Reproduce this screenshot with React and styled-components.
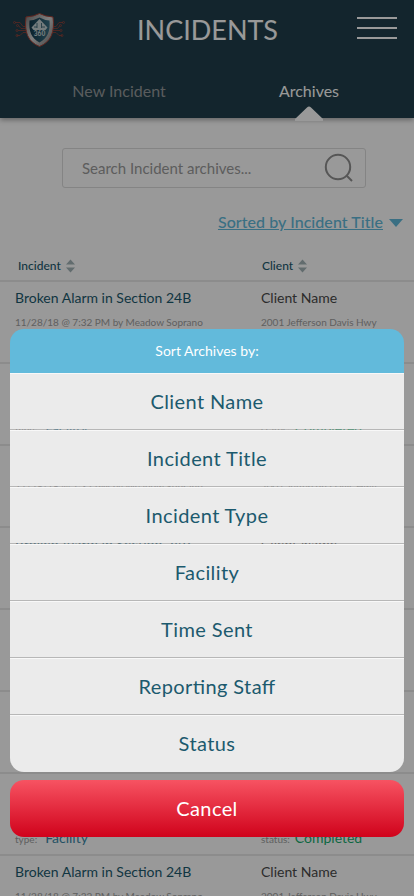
import React, { Fragment } from 'react';
import styled, { createGlobalStyle } from 'styled-components';

const palette = {
    navy: '#213f4b',
    teal: '#1c5a6e',
    blue: '#3d88a8',
    sky: '#62badb',
    green: '#17ad6e',
};

const GlobalStyle = createGlobalStyle`
    * {
        box-sizing: border-box;
    }
    body {
        margin: 0;
        background: #fff;
        font-family: Lato, 'Open Sans', sans-serif;
    }
`;

const Screen = styled.div`
    width: 414px;
    height: 896px;
    overflow: hidden;
    position: relative;
    background: #fff;
`;

const Header = styled.header`
    height: 118px;
    background: ${palette.navy};
    box-shadow: 0 2px 5px rgba(0, 0, 0, 0.35);
`;

const TitleBar = styled.div`
    display: flex;
    align-items: center;
    height: 60px;
    padding: 0 17px 0 12px;
`;

const Title = styled.h1`
    flex: 1;
    margin: 0;
    padding-right: 8px;
    color: #fff;
    font-size: 27px;
    line-height: 34px;
    font-weight: 400;
    text-align: center;
`;

const MenuButton = styled.button`
    display: flex;
    flex-direction: column;
    justify-content: space-between;
    width: 40px;
    height: 22px;
    margin-top: -4px;
    padding: 0;
    border: 0;
    background: none;

    span {
        height: 2px;
        background: #fff;
    }
`;

const Tabs = styled.nav`
    display: flex;
    height: 58px;
    padding: 0 10px 0 24px;
`;

const Tab = styled.a`
    display: flex;
    flex-direction: column;
    align-items: center;
    justify-content: space-between;
    flex: 1;
    padding-top: 21px;
    font-size: 16px;
    line-height: 20px;
    color: ${({ $active }) => ($active ? '#fff' : '#969a9c')};

    svg {
        margin-bottom: -3px;
    }
`;

const SearchBox = styled.div`
    display: flex;
    align-items: center;
    justify-content: space-between;
    width: 304px;
    height: 40px;
    margin: 30px 0 0 62px;
    padding: 0 11px 0 19px;
    border: 1px solid #dcdcdc;
    border-radius: 3px;
    color: #9b9b9b;
    font-size: 15px;
`;

const SortLink = styled.div`
    display: flex;
    align-items: center;
    justify-content: flex-end;
    gap: 6px;
    height: 20px;
    margin-top: 23px;
    padding-right: 11px;
    color: ${palette.sky};
    font-size: 16px;
    font-weight: 500;
    letter-spacing: 0.06px;

    span {
        text-decoration: underline;
    }
    svg {
        margin-top: 4px;
    }
`;

const ListHead = styled.div`
    display: grid;
    grid-template-columns: 244px 1fr;
    height: 49px;
    padding: 25px 0 0 18px;
    font-size: 12px;
    line-height: 20px;
    font-weight: 500;
    color: ${palette.teal};
`;

const HeadCell = styled.div`
    display: flex;
    align-items: center;
    gap: 5px;
    height: 20px;
`;

const Row = styled.div`
    display: grid;
    grid-template-columns: 246px 1fr;
    height: 82px;
    padding: 6px 0 0 15px;
    border-top: 2px solid #eaeaea;
`;

const Name = styled.div`
    height: 20px;
    font-size: 14px;
    line-height: 20px;
    color: ${({ $color }) => $color};
`;

const Meta = styled.div`
    height: 14px;
    margin-top: 7px;
    font-size: 10px;
    line-height: 14px;
    color: #a0a0a0;
`;

const Field = styled.div`
    display: flex;
    align-items: baseline;
    gap: ${({ $gap }) => $gap}px;
    margin-top: 7px;
    height: 20px;
    font-size: 14px;
    line-height: 20px;
    color: ${({ $color }) => $color};

    small {
        font-size: 10px;
        color: #a0a0a0;
    }
`;

const Overlay = styled.div`
    position: absolute;
    inset: 0;
    display: flex;
    flex-direction: column;
    justify-content: flex-end;
    gap: 8px;
    padding: 0 10px 59px;
    background: rgba(0, 0, 0, 0.4);
`;

const SheetTitle = styled.div`
    height: 44px;
    border-radius: 14px 14px 0 0;
    background: ${palette.sky};
    color: #fff;
    font-size: 14px;
    line-height: 44px;
    text-align: center;
`;

const Divider = styled.div`
    height: 1px;
    background: rgba(255, 255, 255, 0.3);
`;

const Option = styled.div`
    height: 56px;
    background: #ebebeb;
    box-shadow: inset 0 1px 0 #f8f8f8;
    color: ${palette.teal};
    font-size: 20px;
    line-height: 57px;
    letter-spacing: 0.4px;
    font-feature-settings: 'liga' 1;
    text-align: center;

    &:last-child {
        height: 57px;
        border-radius: 0 0 14px 14px;
    }
`;

const Cancel = styled.button`
    flex: none;
    height: 57px;
    padding: 0 0 2px;
    border: 0;
    border-radius: 14px;
    background: linear-gradient(#f75362, #d0021b);
    color: #fff;
    font-family: inherit;
    font-size: 20px;
    letter-spacing: 0.4px;
`;

const Logo = () => (
    <svg width="54" height="40" viewBox="0 0 54 40" fill="none">
        <defs>
            <linearGradient id="steel" x1="0" y1="0" x2="1" y2="1">
                <stop offset="0" stopColor="#787878" />
                <stop offset="0.5" stopColor="#d2d2d2" />
                <stop offset="1" stopColor="#707070" />
            </linearGradient>
            <linearGradient id="core" x1="0" y1="0" x2="1" y2="0">
                <stop offset="0" stopColor="#12384b" />
                <stop offset="1" stopColor="#397083" />
            </linearGradient>
        </defs>
        <g stroke="#94413a" strokeWidth="0.800">
            <path d="M15 16.500h-4l-3-4H3M15 18.500H9L6.500 15.500M15 20.500H6M15 22.500H11l-3 3H5M40 16.500h4l3-4h4M40 18.500h5.500l2.500-3M40 20.500h8M40 22.500h4l3 3h3" />
            <circle cx="2.500" cy="12.500" r="1" />
            <circle cx="5.500" cy="15.500" r="1" />
            <circle cx="5" cy="20.500" r="1" />
            <circle cx="5" cy="25.500" r="1" />
            <circle cx="51.500" cy="12.500" r="1" />
            <circle cx="48.500" cy="15.500" r="1" />
            <circle cx="49" cy="20.500" r="1" />
            <circle cx="50" cy="25.500" r="1" />
        </g>
        <path d="M27.500 3.500Q33 6.500 41 7C43 22 39 32 27.500 36.500 16 32 12 22 14 7Q22 6.500 27.500 3.500Z" fill="url(#steel)" stroke="#a64034" strokeWidth="1" />
        <path d="M27.500 7.500Q32 10 37.500 10.500C38.500 21 35.500 28.500 27.500 32.500 19.500 28.500 16.500 21 17.500 10.500Q23 10 27.500 7.500Z" fill="url(#core)" />
        <path d="M27.500 9l8 8.500-2 2.500H21.500l-2-2.500Z" fill="#c4d0d2" />
        <path d="M25 13v5M29.500 13v5M22 17h3M30 17h3" stroke="#396474" strokeWidth="0.900" />
        <text x="27.500" y="26" textAnchor="middle" fontFamily="Lato, sans-serif" fontWeight="900" fontSize="6.500" fill="#c4d0d2">360</text>
    </svg>
);

const SortArrows = () => (
    <svg width="9" height="14" viewBox="0 0 9 14" fill="#a3b5b8">
        <path d="M4.500 0.500L9 5.500H0ZM0 8.500h9L4.500 13.500Z" />
    </svg>
);

const options = ['Client Name', 'Incident Title', 'Incident Type', 'Facility', 'Time Sent', 'Reporting Staff', 'Status'];

const IncidentRow = () => (
    <Row>
        <div>
            <Name $color={palette.teal}>Broken Alarm in Section 24B</Name>
            <Meta>11/28/18 @ 7:32 PM by Meadow Soprano</Meta>
            <Field $gap={8} $color={palette.blue}><small>type:</small>Facility</Field>
        </div>
        <div>
            <Name $color="#4a4a4a">Client Name</Name>
            <Meta>2001 Jefferson Davis Hwy</Meta>
            <Field $gap={5} $color={palette.green}><small>status:</small>Completed</Field>
        </div>
    </Row>
);

const App = () => {
    return (
        <Screen>
            <GlobalStyle />
            <Header>
                <TitleBar>
                    <Logo />
                    <Title>INCIDENTS</Title>
                    <MenuButton aria-label="Menu">
                        <span />
                        <span />
                        <span />
                    </MenuButton>
                </TitleBar>
                <Tabs>
                    <Tab>New Incident</Tab>
                    <Tab $active>
                        Archives
                        <svg width="28" height="15" viewBox="0 0 28 15" fill="#fff">
                            <path d="M0 13L12 1.500q2-2 4 0L28 13v2H0Z" />
                        </svg>
                    </Tab>
                </Tabs>
            </Header>
            <SearchBox>
                Search Incident archives...
                <svg width="30" height="30" viewBox="0 0 30 30" fill="none" stroke="#8f8f8f" strokeWidth="2">
                    <circle cx="14" cy="14" r="12.200" />
                    <path d="M22.500 22.500l5.500 5.500" />
                </svg>
            </SearchBox>
            <SortLink>
                <span>Sorted by Incident Title</span>
                <svg width="14" height="8" viewBox="0 0 14 8" fill="currentColor">
                    <path d="M0 0h14L7 8Z" />
                </svg>
            </SortLink>
            <ListHead>
                <HeadCell>Incident<SortArrows /></HeadCell>
                <HeadCell>Client<SortArrows /></HeadCell>
            </ListHead>
            {Array.from({ length: 8 }, (_, i) => (
                <IncidentRow key={i} />
            ))}
            <Overlay>
                <div>
                    <SheetTitle>Sort Archives by:</SheetTitle>
                    {options.map((option, i) => (
                        <Fragment key={option}>
                            {i > 0 && <Divider />}
                            <Option>{option}</Option>
                        </Fragment>
                    ))}
                </div>
                <Cancel>Cancel</Cancel>
            </Overlay>
        </Screen>
    );
};

export default App;
